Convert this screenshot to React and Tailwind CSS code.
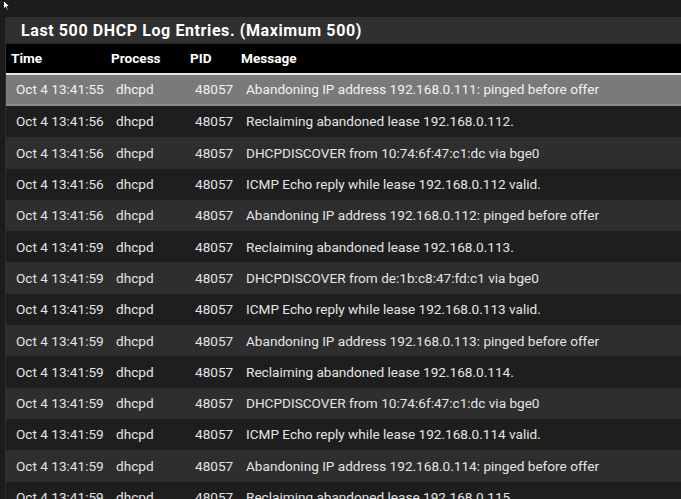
const rows = [
  ["Oct 4 13:41:55", "dhcpd", "48057", "Abandoning IP address 192.168.0.111: pinged before offer"],
  ["Oct 4 13:41:56", "dhcpd", "48057", "Reclaiming abandoned lease 192.168.0.112."],
  ["Oct 4 13:41:56", "dhcpd", "48057", "DHCPDISCOVER from 10:74:6f:47:c1:dc via bge0"],
  ["Oct 4 13:41:56", "dhcpd", "48057", "ICMP Echo reply while lease 192.168.0.112 valid."],
  ["Oct 4 13:41:56", "dhcpd", "48057", "Abandoning IP address 192.168.0.112: pinged before offer"],
  ["Oct 4 13:41:59", "dhcpd", "48057", "Reclaiming abandoned lease 192.168.0.113."],
  ["Oct 4 13:41:59", "dhcpd", "48057", "DHCPDISCOVER from de:1b:c8:47:fd:c1 via bge0"],
  ["Oct 4 13:41:59", "dhcpd", "48057", "ICMP Echo reply while lease 192.168.0.113 valid."],
  ["Oct 4 13:41:59", "dhcpd", "48057", "Abandoning IP address 192.168.0.113: pinged before offer"],
  ["Oct 4 13:41:59", "dhcpd", "48057", "Reclaiming abandoned lease 192.168.0.114."],
  ["Oct 4 13:41:59", "dhcpd", "48057", "DHCPDISCOVER from 10:74:6f:47:c1:dc via bge0"],
  ["Oct 4 13:41:59", "dhcpd", "48057", "ICMP Echo reply while lease 192.168.0.114 valid."],
  ["Oct 4 13:41:59", "dhcpd", "48057", "Abandoning IP address 192.168.0.114: pinged before offer"],
  ["Oct 4 13:41:59", "dhcpd", "48057", "Reclaiming abandoned lease 192.168.0.115."],
];

const cols = "grid grid-cols-[100px_80px_50px_1fr]";

export default function App() {
  return (
    <div className="relative h-[499px] w-[681px] overflow-hidden bg-[#1c1c1c] pt-[17px] pl-[5px] font-['Roboto','Liberation_Sans',sans-serif]">
      {/* cursor */}
      <svg className="absolute left-[3px] top-0" width="8" height="11" viewBox="0 0 8 11">
        <path d="M0.5 0.5 L0.5 9 L2.6 7 L4 10.3 L5.3 9.7 L3.9 6.6 L6.8 6.6 Z" fill="#fff" stroke="#000" strokeWidth="0.8" />
      </svg>

      <div className="border-l border-[#2e2e2e]">
        {/* Title */}
        <div className="flex h-[27px] items-center border-b border-[#262626] bg-[#303030] pl-[15px] pt-[1px] text-[16px] font-bold tracking-[0.6px] text-white">
          Last 500 DHCP Log Entries. (Maximum 500)
        </div>

        {/* Header */}
        <div className={`${cols} h-[31px] items-center border-b-2 border-[#e8e8e8] bg-black text-[13.6px] font-bold text-white`}>
          <div className="pl-[5px]">Time</div>
          <div className="pl-[5px]">Process</div>
          <div className="pl-[4px]">PID</div>
          <div className="pl-[5px]">Message</div>
        </div>

        {/* Rows */}
        {rows.map((r, i) => {
          const bg =
            i === 0
              ? "h-[31px] bg-[#7a7a7a] border-b-2 border-[#8c8c8c] text-[#f2f2f2]"
              : i % 2 === 0
              ? "h-[31.3px] bg-[#2e2e2e] text-[#e4e4e4]"
              : "h-[31.3px] bg-[#1e1e1e] text-[#e4e4e4]";
          return (
            <div key={i} className={`${cols} items-center text-[13.6px] ${bg}`}>
              <div className="pl-[10px] whitespace-nowrap">{r[0]}</div>
              <div className="pl-[10px]">{r[1]}</div>
              <div className="pl-[9px]">{r[2]}</div>
              <div className="pl-[10px] whitespace-nowrap">{r[3]}</div>
            </div>
          );
        })}
      </div>
    </div>
  );
}
